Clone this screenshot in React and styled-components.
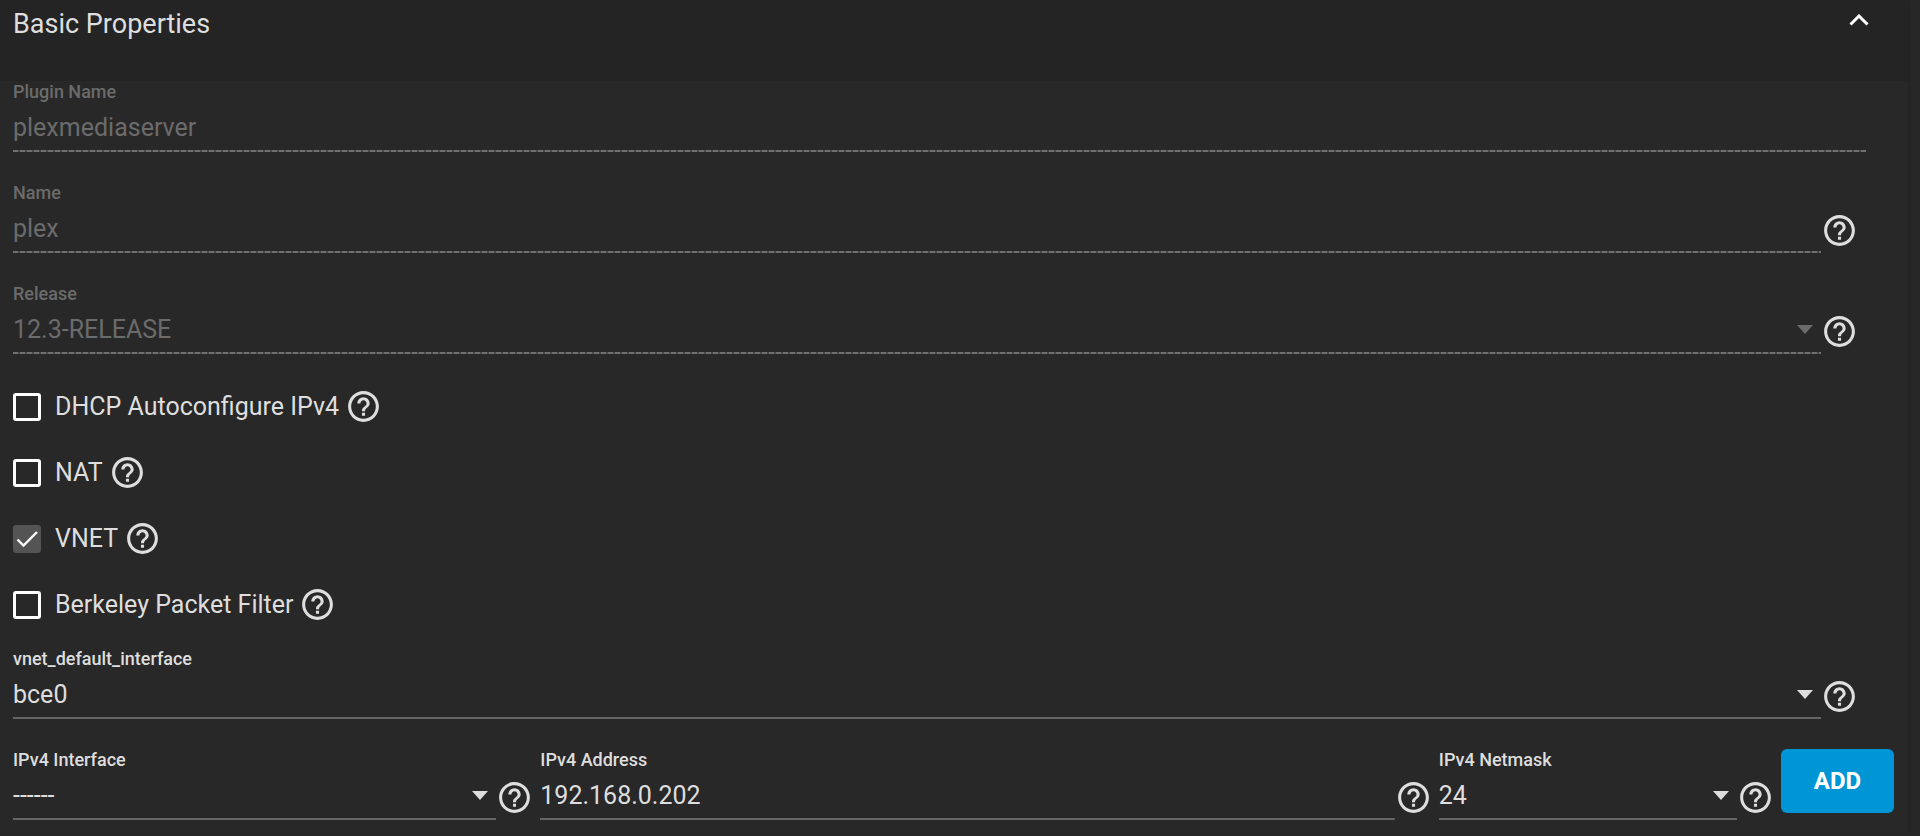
import { useState } from 'react';
import styled, { createGlobalStyle, css } from 'styled-components';

const INTERFACES = ['------', 'bce0'];
const NETMASKS = ['24', '16', '8'];

/*
 *  Component: HelpButton
 *  Description: Round question mark shown next to a field
 */
const HelpButton = ({ topic }) => (
  <Help type="button" aria-label={`Help: ${topic}`}>
    <svg viewBox="0 0 24 24" fill="currentColor" aria-hidden="true">
      <path d="M11 18h2v-2h-2v2zm1-16C6.48 2 2 6.48 2 12s4.48 10 10 10 10-4.48 10-10S17.52 2 12 2zm0 18c-4.41 0-8-3.59-8-8s3.59-8 8-8 8 3.59 8 8-3.59 8-8 8zm0-14c-2.21 0-4 1.79-4 4h2c0-1.1.9-2 2-2s2 .9 2 2c0 2-3 1.75-3 5h2c0-2.25 3-2.5 3-5 0-2.21-1.79-4-4-4z" />
    </svg>
  </Help>
);

/*
 *  Component: TextField
 *  Description: Underlined text input with its label on top
 */
const TextField = ({ id, label, help, ...rest }) => (
  <FieldRow>
    <Field $disabled={rest.disabled}>
      <Label htmlFor={id}>{label}</Label>
      <Input id={id} type="text" {...rest} />
    </Field>
    {help && <HelpButton topic={label} />}
  </FieldRow>
);

/*
 *  Component: SelectField
 *  Description: Underlined drop down, the arrow is drawn over the native select
 */
const SelectField = ({ id, label, options, ...rest }) => (
  <FieldRow>
    <Field $disabled={rest.disabled}>
      <Label htmlFor={id}>{label}</Label>
      <SelectWrap>
        <Select id={id} {...rest}>
          {options.map((option) => (
            <option key={option} value={option}>{option}</option>
          ))}
        </Select>
        <Arrow />
      </SelectWrap>
    </Field>
    <HelpButton topic={label} />
  </FieldRow>
);

const CheckField = ({ id, label, checked, disabled, onChange }) => (
  <CheckRow>
    <CheckBox>
      <input id={id} type="checkbox" checked={checked} disabled={disabled} onChange={onChange} />
      {checked && (
        <svg viewBox="0 0 28 28" fill="none" stroke="#fafafa" strokeWidth="2.4" aria-hidden="true">
          <path d="M4.500 14.500l6 6L24 7" />
        </svg>
      )}
    </CheckBox>
    <CheckLabel htmlFor={id}>{label}</CheckLabel>
    <HelpButton topic={label} />
  </CheckRow>
);

const App = () => {
  const [open, setOpen] = useState(true);
  const [values, setValues] = useState({
    dhcp: false,
    nat: false,
    bpf: false,
    vnetInterface: 'bce0',
    ipInterface: '------',
    ipAddress: '192.168.0.202',
    netmask: '24',
  });

  const handleCheck = (key) => (event) => setValues({ ...values, [key]: event.target.checked });
  const handleValue = (key) => (event) => setValues({ ...values, [key]: event.target.value });

  return (
    <Page>
      <GlobalStyle />
      <Panel>
        <PanelHeader>
          <Title>Basic Properties</Title>
          <Toggle
            type="button"
            aria-label="Toggle Basic Properties"
            aria-expanded={open}
            onClick={() => setOpen(!open)}
          >
            <Chevron viewBox="0 0 20 12" $open={open} aria-hidden="true">
              <path d="M1.500 10.500L10 2l8.500 8.500" />
            </Chevron>
          </Toggle>
        </PanelHeader>
        {open && (
          <PanelBody>
            <PluginRow>
              <TextField id="plugin" label="Plugin Name" value="plexmediaserver" disabled readOnly />
            </PluginRow>
            <Inset>
              <TextField id="name" label="Name" value="plex" disabled readOnly help />
              <SelectField id="release" label="Release" options={['12.3-RELEASE']} disabled />
              <CheckList>
                <CheckField id="dhcp" label="DHCP Autoconfigure IPv4" checked={values.dhcp} onChange={handleCheck('dhcp')} />
                <CheckField id="nat" label="NAT" checked={values.nat} onChange={handleCheck('nat')} />
                <CheckField id="vnet" label="VNET" checked disabled />
                <CheckField id="bpf" label="Berkeley Packet Filter" checked={values.bpf} onChange={handleCheck('bpf')} />
              </CheckList>
              <SelectField
                id="vnet-interface"
                label="vnet_default_interface"
                options={INTERFACES}
                value={values.vnetInterface}
                onChange={handleValue('vnetInterface')}
              />
            </Inset>
            <AddressRow>
              <SelectField
                id="ip-interface"
                label="IPv4 Interface"
                options={INTERFACES}
                value={values.ipInterface}
                onChange={handleValue('ipInterface')}
              />
              <TextField
                id="ip-address"
                label="IPv4 Address"
                value={values.ipAddress}
                onChange={handleValue('ipAddress')}
                help
              />
              <SelectField
                id="netmask"
                label="IPv4 Netmask"
                options={NETMASKS}
                value={values.netmask}
                onChange={handleValue('netmask')}
              />
              <AddButton type="button">ADD</AddButton>
            </AddressRow>
          </PanelBody>
        )}
      </Panel>
    </Page>
  );
};

const GlobalStyle = createGlobalStyle`
  * {
    box-sizing: border-box;
  }

  body {
    margin: 0;
    background: #272727;
    color: #dedede;
    font-family: Roboto, sans-serif;
  }

  button, input, select {
    font-family: inherit;
  }
`;

// Leaves the strip on the right free
const Page = styled.main`
  padding-right: 12px;
`;

const Panel = styled.section`
  background: #282828;
  box-shadow: 0 0 4px rgba(0, 0, 0, 0.3);
`;

const PanelHeader = styled.header`
  display: flex;
  justify-content: space-between;
  align-items: flex-start;
  height: 81px;
  padding: 8px 34px 0 13px;
  background: #242424;
`;

const Title = styled.h1`
  margin: 0;
  font-size: 27px;
  font-weight: 400;
  line-height: 32px;
`;

const Toggle = styled.button`
  display: flex;
  padding: 6px 5px;
  border: 0;
  background: none;
  color: #fff;
  cursor: pointer;
`;

const Chevron = styled.svg`
  width: 20px;
  height: 12px;
  fill: none;
  stroke: currentColor;
  stroke-width: 3;
  transform: ${({ $open }) => ($open ? 'none' : 'rotate(180deg)')};
`;

const PanelBody = styled.div`
  padding: 0 14px 12px 13px;
`;

const FieldRow = styled.div`
  display: flex;
  align-items: flex-end;
`;

const PluginRow = styled.div`
  padding: 0 28px 30px 0;
`;

// Fields that carry a help icon end before the panel edge
const Inset = styled.div`
  padding-right: 36px;

  > ${FieldRow} {
    padding-bottom: 30px;
  }
`;

const dashes = css`
  color: #6b6b6b;
  background: repeating-linear-gradient(90deg, #707070 0 5px, #484848 5px 7px) bottom / 100% 2px no-repeat;
`;

const line = css`
  color: #dedede;
  background: linear-gradient(#656565, #656565) bottom / 100% 2px no-repeat;
`;

const Field = styled.div`
  flex: 1;
  min-width: 0;
  padding-bottom: 2px;
  ${({ $disabled }) => ($disabled ? dashes : line)}
`;

const Label = styled.label`
  display: block;
  padding-bottom: 2px;
  font-size: 18px;
  font-weight: 500;
  line-height: 22px;
`;

const Input = styled.input`
  display: block;
  width: 100%;
  height: 45px;
  padding: 0;
  border: 0;
  outline: 0;
  background: none;
  color: inherit;
  font-size: 25px;
`;

const SelectWrap = styled.div`
  display: flex;
  align-items: center;
  position: relative;
`;

const Select = styled.select`
  appearance: none;
  width: 100%;
  height: 45px;
  padding: 0;
  border: 0;
  outline: 0;
  background: none;
  color: inherit;
  font-size: 25px;
  opacity: 1;

  option {
    background: #282828;
    color: #dedede;
  }
`;

const Arrow = styled.span`
  position: absolute;
  right: 8px;
  border-top: 9px solid currentColor;
  border-left: 8px solid transparent;
  border-right: 8px solid transparent;
  pointer-events: none;
`;

const Help = styled.button`
  flex: none;
  width: 37px;
  height: 37px;
  padding: 0;
  border: 0;
  background: none;
  color: #dedede;
  cursor: pointer;

  ${FieldRow} > & {
    margin-bottom: 4px;
  }

  svg {
    display: block;
  }
`;

const CheckList = styled.div`
  display: flex;
  flex-direction: column;
  gap: 29px;
  padding: 4px 0 25px;
`;

const CheckRow = styled.div`
  display: flex;
  align-items: center;
`;

const CheckBox = styled.span`
  display: grid;
  width: 28px;
  height: 28px;

  > * {
    grid-area: 1 / 1;
  }

  input {
    appearance: none;
    width: 28px;
    height: 28px;
    margin: 0;
    border: 3px solid #fff;
    border-radius: 3px;
  }

  input:checked {
    border: 0;
    background: #545454;
  }

  svg {
    pointer-events: none;
  }
`;

const CheckLabel = styled.label`
  margin: 0 6px 0 14px;
  font-size: 25px;
  line-height: 32px;
`;

const AddressRow = styled.div`
  display: grid;
  grid-template-columns: 520fr 891fr 335fr 113px;
  column-gap: 7px;
`;

const AddButton = styled.button`
  height: 64px;
  border: 0;
  border-radius: 6px;
  background: #0095d5;
  color: #fff;
  font-size: 24px;
  font-weight: 700;
  cursor: pointer;
`;

export default App;
